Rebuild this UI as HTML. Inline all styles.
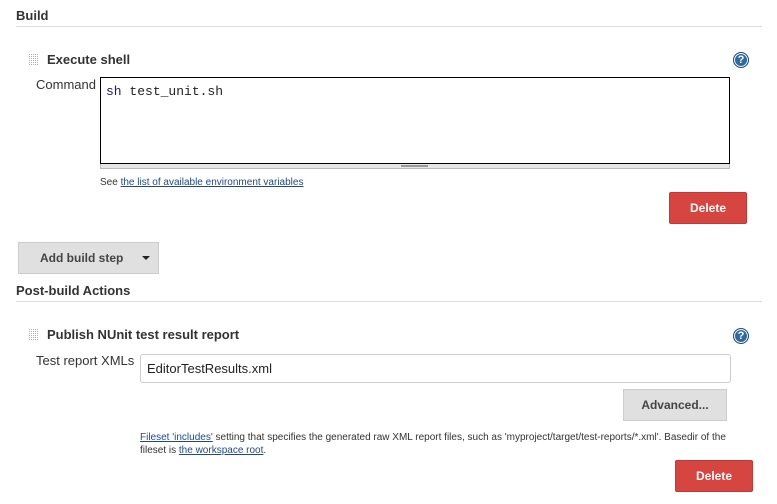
<!DOCTYPE html>
<html><head><style>
*{margin:0;padding:0;box-sizing:border-box}
body{width:777px;height:504px;background:#fff;font-family:"Liberation Sans",sans-serif;color:#333;position:relative;overflow:hidden}
.a{position:absolute;white-space:nowrap}
.h{font-weight:bold;font-size:13px;color:#333}
.line{position:absolute;height:1px;background:#ddd}
.grip{position:absolute;width:10px;height:12px}
.help{position:absolute;width:16px;height:16px;border-radius:50%;background:#2f6aa3;border:1px solid #1a4b7c;box-shadow:inset 0 0 0 1px #fff;color:#fff;font:bold 11px "Liberation Sans",sans-serif;text-align:center;line-height:14px}
.del{position:absolute;background:#d64540;border:1px solid #c03a35;border-radius:2px;color:#fff;font-weight:bold;font-size:12px;text-align:center}
.btn{position:absolute;background:#e0e0e0;border:1px solid #ccc;color:#444;font-weight:bold;font-size:12px}
a{color:#204a87;text-decoration:underline}
.s{font-size:10px;color:#333}
</style></head><body>
<svg width="0" height="0" style="position:absolute"><defs><pattern id="g" width="2" height="2" patternUnits="userSpaceOnUse"><rect width="1" height="1" fill="#b0b0b0"/></pattern></defs></svg>
<div class="a h" style="left:16px;top:8px">Build</div>
<div class="line" style="left:16px;top:26px;width:746px"></div>
<svg class="grip" style="left:29px;top:54px" width="10" height="12"><rect width="10" height="12" fill="url(#g)"/></svg>
<div class="a h" style="left:47px;top:52px">Execute shell</div>
<div class="help" style="left:733px;top:52px">?</div>
<div class="a" style="left:36px;top:77px;font-size:13px">Command</div>
<div class="a" style="left:100px;top:77px;width:630px;height:87px;border:1px solid #000;background:#fff;font-family:'Liberation Mono',monospace;font-size:13px;padding:6px 5px;color:#222"><span style="color:#1a1a7a">sh</span> test_unit.sh</div>
<div class="a" style="left:100px;top:164px;width:630px;height:5px;background:#e6e6e6;border:1px solid #bbb;border-top:none"></div>
<div class="a" style="left:401px;top:165px;width:27px;height:2px;border-top:1px solid #999;border-bottom:1px solid #999"></div>
<div class="a s" style="left:100px;top:177px">See <a>the list of available environment variables</a></div>
<div class="del" style="left:669px;top:192px;width:78px;height:32px;line-height:30px">Delete</div>
<div class="btn" style="left:18px;top:242px;width:141px;height:32px;line-height:30px;padding-left:21px">Add build step<span style="position:absolute;left:123px;top:13px;border-left:4px solid transparent;border-right:4px solid transparent;border-top:4px solid #222"></span></div>
<div class="a h" style="left:16px;top:283px">Post-build Actions</div>
<div class="line" style="left:16px;top:301px;width:746px"></div>
<svg class="grip" style="left:29px;top:329px" width="10" height="12"><rect width="10" height="12" fill="url(#g)"/></svg>
<div class="a h" style="left:47px;top:327px">Publish NUnit test result report</div>
<div class="help" style="left:733px;top:328px">?</div>
<div class="a" style="left:36px;top:353px;font-size:13px">Test report XMLs</div>
<div class="a" style="left:140px;top:354px;width:591px;height:29px;border:1px solid #ccc;border-radius:3px;font-size:13px;line-height:27px;padding-left:6px;color:#222">EditorTestResults.xml</div>
<div class="btn" style="left:623px;top:389px;width:104px;height:32px;line-height:30px;text-align:center">Advanced...</div>
<div class="a s" style="left:140px;top:431px;line-height:13px">
<a>Fileset 'includes'</a> setting that specifies the generated raw XML report files, such as 'myproject/target/test-reports/*.xml'. Basedir of the<br>fileset is <a>the workspace root</a>.</div>
<div class="del" style="left:675px;top:460px;width:78px;height:32px;line-height:30px">Delete</div>
</body></html>
